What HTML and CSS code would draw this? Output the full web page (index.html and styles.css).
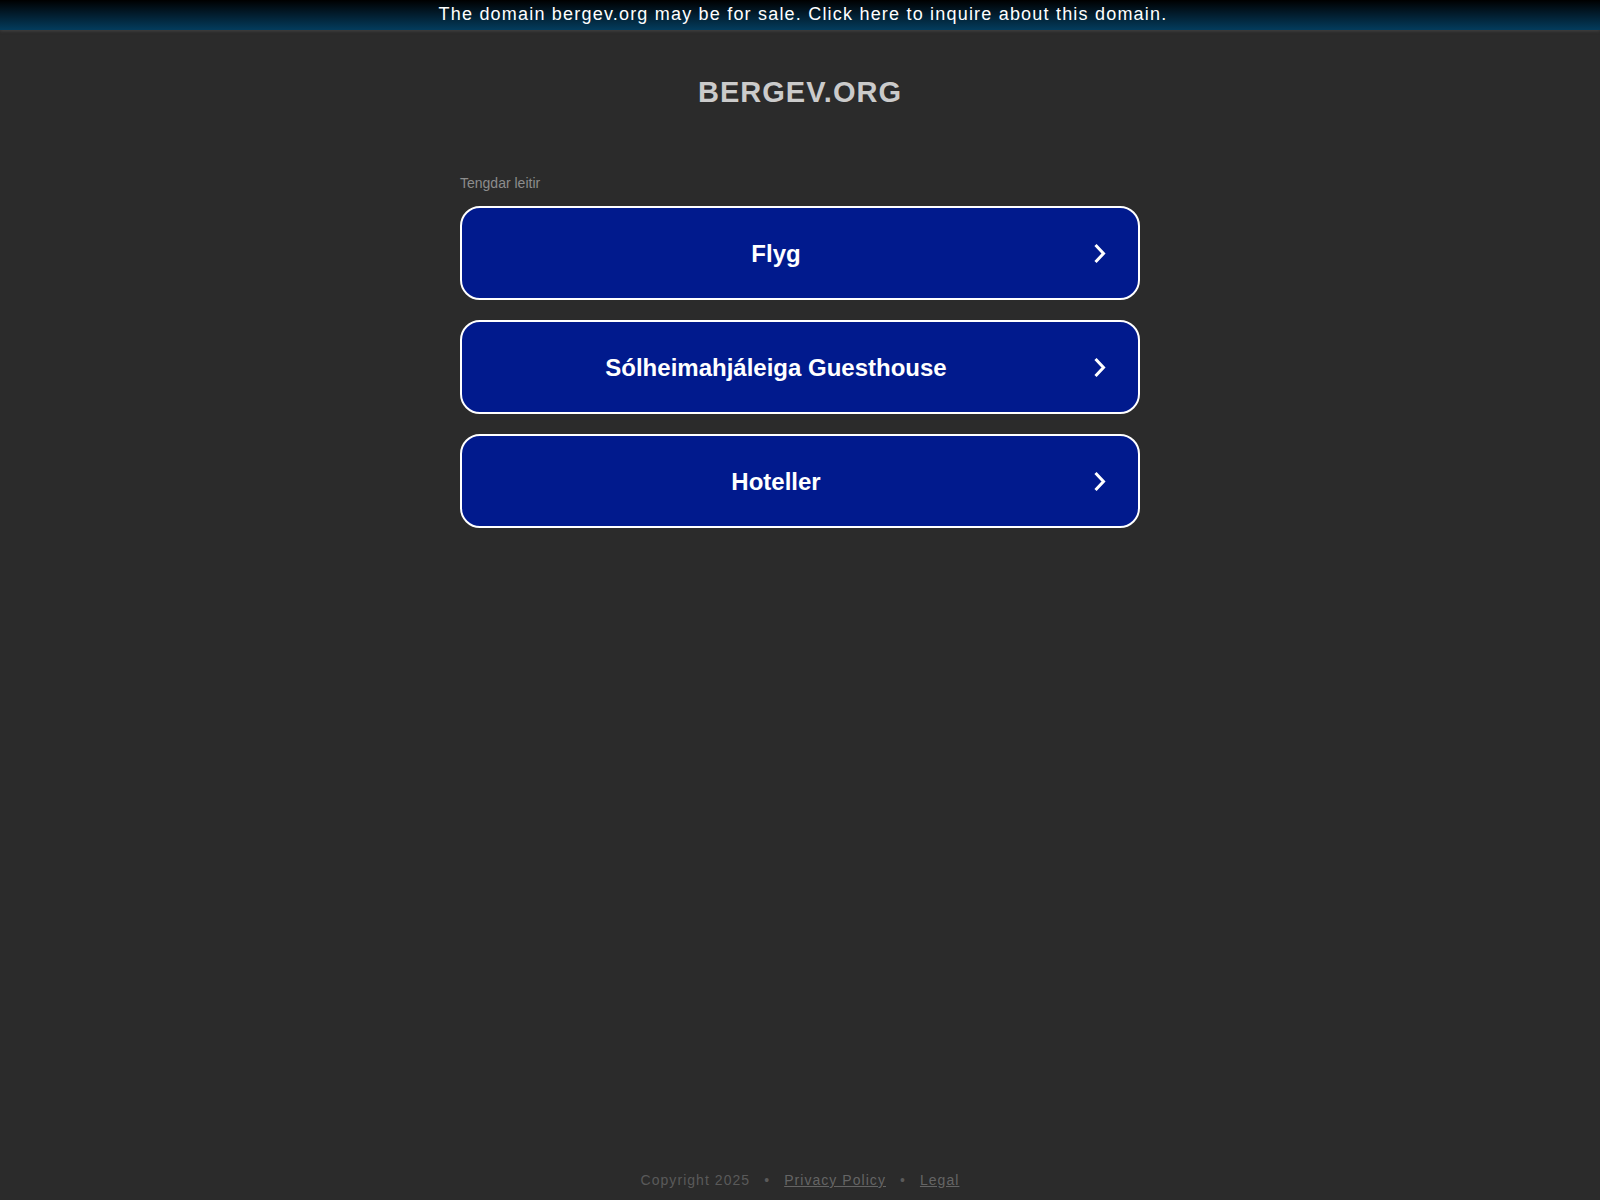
FILE: index.html
```html
<!DOCTYPE html>
<html lang="is">
<head>
<meta charset="utf-8">
<title>bergev.org</title>
<link rel="stylesheet" href="styles.css">
</head>
<body>
<div class="page">
  <a class="banner" href="#">The domain bergev.org may be for sale. Click here to inquire about this domain.</a>
  <main class="main">
    <h1 class="title">BERGEV.ORG</h1>
    <div class="related">
      <div class="related-label">Tengdar leitir</div>
      <a class="result" href="#">
        <span class="result-text">Flyg</span>
        <span class="result-arrow"><svg width="14" height="21" viewBox="0 0 14 21"><path d="M2.5 2 L10.5 10.5 L2.5 19" fill="none" stroke="#fff" stroke-width="3"/></svg></span>
      </a>
      <a class="result" href="#">
        <span class="result-text">Sólheimahjáleiga Guesthouse</span>
        <span class="result-arrow"><svg width="14" height="21" viewBox="0 0 14 21"><path d="M2.5 2 L10.5 10.5 L2.5 19" fill="none" stroke="#fff" stroke-width="3"/></svg></span>
      </a>
      <a class="result" href="#">
        <span class="result-text">Hoteller</span>
        <span class="result-arrow"><svg width="14" height="21" viewBox="0 0 14 21"><path d="M2.5 2 L10.5 10.5 L2.5 19" fill="none" stroke="#fff" stroke-width="3"/></svg></span>
      </a>
    </div>
  </main>
  <footer class="footer">
    <span class="copy">Copyright 2025</span><span class="sep">•</span><a class="flink" href="#">Privacy Policy</a><span class="sep">•</span><a class="flink" href="#">Legal</a>
  </footer>
</div>
</body>
</html>
```
FILE: styles.css
```css
html, body {
  margin: 0;
  padding: 0;
}
body {
  background: #2b2b2b;
  font-family: "Liberation Sans", Arial, sans-serif;
}
.page {
  min-height: 100vh;
  display: flex;
  flex-direction: column;
}
.banner {
  display: block;
  height: 30px;
  box-sizing: border-box;
  padding-top: 4px;
  padding-left: 6px;
  text-align: center;
  font-size: 18px;
  letter-spacing: 1.2px;
  color: #fff;
  text-decoration: none;
  background: linear-gradient(to bottom, #000 0%, #021b2b 45%, #033c5d 100%);
  box-shadow: 0 1px 3px rgba(70, 70, 70, 0.9);
}
.main {
  flex: 1;
  display: flex;
  flex-direction: column;
  align-items: center;
}
.title {
  margin: 46px 0 0;
  font-size: 29px;
  letter-spacing: 1px;
  font-weight: bold;
  line-height: normal;
  color: #cbcbcb;
}
.related {
  width: 680px;
  margin-top: 66px;
  display: flex;
  flex-direction: column;
}
.related-label {
  font-size: 14px;
  color: #8d8d8d;
  margin-bottom: 15px;
}
.result {
  display: flex;
  align-items: center;
  height: 94px;
  box-sizing: border-box;
  border: 2px solid #fff;
  border-radius: 20px;
  background: #011a8d;
  color: #fff;
  text-decoration: none;
  margin-bottom: 20px;
}
.result-text {
  flex: 1;
  text-align: center;
  font-size: 24px;
  font-weight: bold;
  padding-top: 2px;
}
.result-arrow {
  width: 20px;
  margin-right: 28px;
  display: flex;
  justify-content: center;
}
.result-arrow svg {
  display: block;
}
.footer {
  text-align: center;
  font-size: 14px;
  letter-spacing: 1.05px;
  color: #5a5a5a;
  padding-bottom: 12px;
}
.sep {
  padding: 0 14px;
}
.flink {
  color: #656565;
  text-decoration: underline;
}
```
